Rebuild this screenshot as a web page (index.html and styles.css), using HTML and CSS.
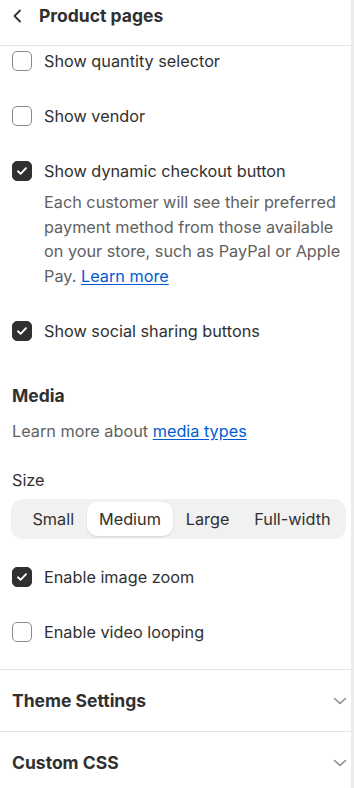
FILE: index.html
```html
<!DOCTYPE html>
<html>
	<head>
		<title>Product pages</title>
		<meta charset="UTF-8">
		<link rel="stylesheet" href="styles.css">
	</head>
	<body>
		<div class="frame">
			<div class="panel">
				<div class="header">
					<svg class="back" width="20" height="20" viewBox="0 0 20 20"><path d="M12 4.5 6.5 10l5.5 5.5" fill="none" stroke="#303030" stroke-width="1.8" stroke-linecap="round" stroke-linejoin="round"/></svg>
					<h1>Product pages</h1>
				</div>

				<div class="section">
					<label class="check"><span class="box"></span>Show quantity selector</label>
					<label class="check"><span class="box"></span>Show vendor</label>
					<div class="group">
						<label class="check"><span class="box on"></span>Show dynamic checkout button</label>
						<p class="help">Each customer will see their preferred payment method from those available on your store, such as PayPal or Apple Pay. <a href="#">Learn more</a></p>
					</div>
					<label class="check"><span class="box on"></span>Show social sharing buttons</label>

					<h2 class="media-title">Media</h2>
					<p class="media-note">Learn more about <a href="#">media types</a></p>

					<div class="field-label">Size</div>
					<div class="segmented">
						<span>Small</span>
						<span class="selected">Medium</span>
						<span>Large</span>
						<span>Full-width</span>
					</div>

					<label class="check zoom"><span class="box on"></span>Enable image zoom</label>
					<label class="check"><span class="box"></span>Enable video looping</label>
				</div>

				<div class="collapse">
					<h2>Theme Settings</h2>
					<svg width="16" height="16" viewBox="0 0 16 16"><path d="M2.5 5.5 8 10.5 13.5 5.5" fill="none" stroke="#8a8a8a" stroke-width="1.5" stroke-linecap="round" stroke-linejoin="round"/></svg>
				</div>
				<div class="collapse">
					<h2>Custom CSS</h2>
					<svg width="16" height="16" viewBox="0 0 16 16"><path d="M2.5 5.5 8 10.5 13.5 5.5" fill="none" stroke="#8a8a8a" stroke-width="1.5" stroke-linecap="round" stroke-linejoin="round"/></svg>
				</div>
			</div>
			<div class="track"></div>
		</div>
	</body>
</html>
```

FILE: styles.css
```css
body {
	margin: 0;
	background: #ffffff;
	font-family: Inter, "Noto Sans", sans-serif;
	color: #303030;
	font-size: 16.25px;
}

.frame {
	display: flex;
	height: 788px;
	overflow: hidden;
}

.panel {
	flex: 1;
}

.track {
	width: 3px;
	background: #ebebeb;
}

.header {
	display: flex;
	align-items: flex-start;
	height: 41px;
	padding: 4px 0 0 8px;
	border-bottom: 1px solid #e3e3e3;
}

.back {
	margin: 2px 11px 0 0;
}

.header h1 {
	margin: 0;
	font-size: 17.5px;
	line-height: 24px;
	font-weight: 700;
}

.section {
	padding: 3px 8px 25px 12px;
	border-bottom: 1px solid #e3e3e3;
	display: flex;
	flex-direction: column;
	gap: 31px;
}

.check {
	display: flex;
	align-items: center;
	line-height: 24px;
	gap: 12px;
}

.box {
	width: 18px;
	height: 18px;
	border: 1px solid #8a8a8a;
	border-radius: 5px;
	box-sizing: content-box;
}

.box.on {
	border-color: #303030;
	background: #303030 url("data:image/svg+xml,%3Csvg xmlns='http://www.w3.org/2000/svg' width='20' height='20' viewBox='0 0 20 20'%3E%3Cpath d='M6 10.3 8.6 12.8 14 7.2' fill='none' stroke='white' stroke-width='1.9' stroke-linecap='round' stroke-linejoin='round'/%3E%3C/svg%3E") center no-repeat;
}

.group .help {
	margin: 7px 0 0 32px;
	color: #616161;
	line-height: 24.6px;
}

a {
	color: #005bd3;
	text-decoration: underline;
	text-underline-offset: 2px;
}

.media-title {
	margin: 10px 0 0 0;
	font-size: 17.5px;
	line-height: 24px;
	font-weight: 700;
}

.media-note {
	margin: -20px 0 0 0;
	line-height: 24px;
	color: #616161;
}

.field-label {
	margin-top: -6px;
	line-height: 24px;
}

.segmented {
	margin: -24px -3px 0 -1px;
	display: flex;
	background: #f1f1f1;
	border-radius: 12px;
	padding: 3px 3px 3px 9px;
	height: 34px;
}

.segmented span {
	flex: 1 1 auto;
	display: flex;
	align-items: center;
	justify-content: center;
	padding: 0 6px;
	border-radius: 10px;
}

.segmented .selected {
	background: #ffffff;
	box-shadow: 0 1px 2px rgba(0,0,0,0.12);
}

.check.zoom {
	margin-top: -5px;
}

.collapse {
	display: flex;
	align-items: center;
	justify-content: space-between;
	height: 61px;
	padding: 0 3px 0 12px;
	border-bottom: 1px solid #e3e3e3;
}

.collapse h2 {
	margin: 0;
	font-size: 17.5px;
	font-weight: 700;
}
```
